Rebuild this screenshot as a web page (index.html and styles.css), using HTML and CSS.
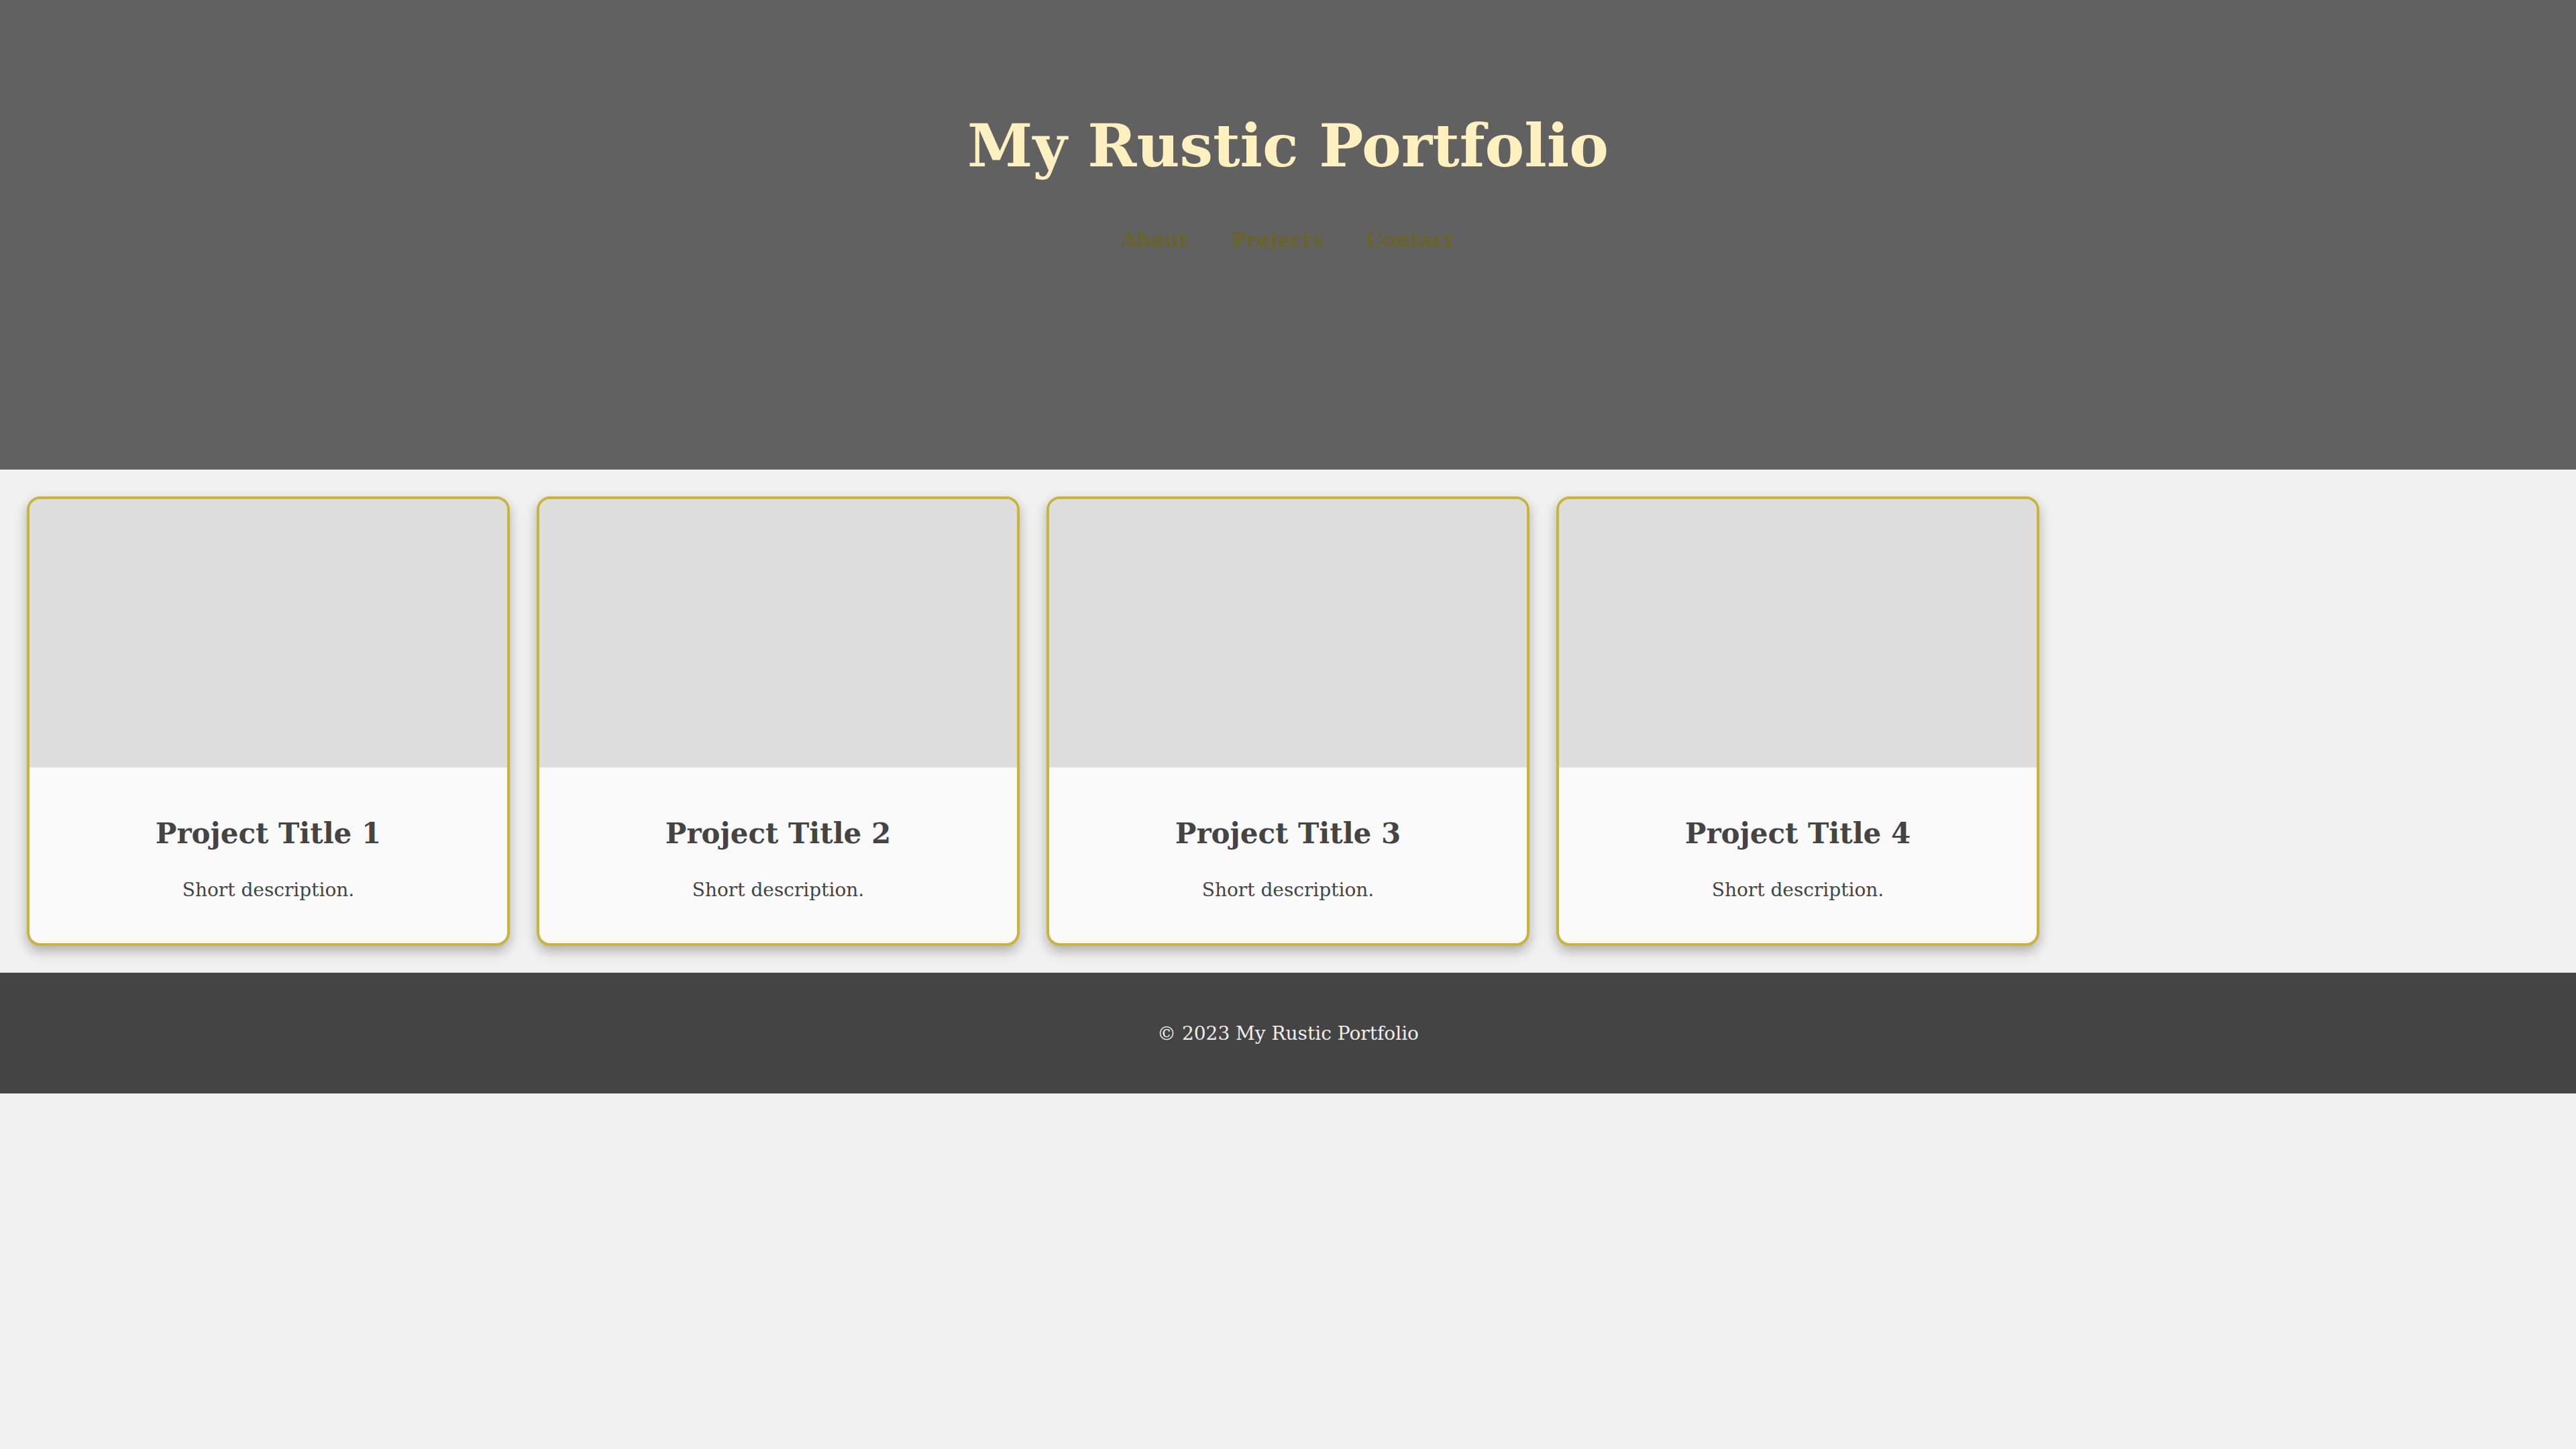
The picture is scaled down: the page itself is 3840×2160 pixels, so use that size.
FILE: index.html
```html
<!DOCTYPE html>
<html lang="en">
<head>
<meta charset="utf-8">
<title>My Rustic Portfolio</title>
<link rel="stylesheet" href="styles.css">
</head>
<body>
<header class="site-header">
  <h1 class="site-title">My Rustic Portfolio</h1>
  <nav class="site-nav">
    <a href="#about">About</a>
    <a href="#projects">Projects</a>
    <a href="#contact">Contact</a>
  </nav>
</header>
<main class="projects">
  <article class="card">
    <div class="card-image"></div>
    <div class="card-body">
      <h3 class="card-title">Project Title 1</h3>
      <p class="card-text">Short description.</p>
    </div>
  </article>
  <article class="card">
    <div class="card-image"></div>
    <div class="card-body">
      <h3 class="card-title">Project Title 2</h3>
      <p class="card-text">Short description.</p>
    </div>
  </article>
  <article class="card">
    <div class="card-image"></div>
    <div class="card-body">
      <h3 class="card-title">Project Title 3</h3>
      <p class="card-text">Short description.</p>
    </div>
  </article>
  <article class="card">
    <div class="card-image"></div>
    <div class="card-body">
      <h3 class="card-title">Project Title 4</h3>
      <p class="card-text">Short description.</p>
    </div>
  </article>
</main>
<footer class="site-footer">
  <p>&copy; 2023 My Rustic Portfolio</p>
</footer>
</body>
</html>
```
FILE: styles.css
```css
* { box-sizing: border-box; }
html, body { margin: 0; padding: 0; }
body {
  background: #f1f1f1;
  font-family: "DejaVu Serif", "Liberation Serif", serif;
  color: #444;
  font-size: 32px;
}
.site-header {
  background: #616161;
  height: 700px;
  padding-top: 165px;
  text-align: center;
}
.site-title {
  margin: 0;
  font-size: 88px;
  line-height: 1.2;
  color: #fff0c0;
  font-weight: bold;
}
.site-nav {
  margin-top: 69px;
  display: flex;
  justify-content: center;
  gap: 64px;
}
.site-nav a {
  color: #6b6426;
  text-decoration: none;
  font-weight: bold;
  font-size: 30px;
}
.projects {
  display: grid;
  grid-template-columns: repeat(4, 720px);
  gap: 40px;
  padding: 40px;
}
.card {
  border: 4px solid #c9b53a;
  border-radius: 20px;
  overflow: hidden;
  background: #fafafa;
  box-shadow: 0 8px 18px rgba(0, 0, 0, 0.28);
}
.card-image {
  height: 400px;
  background: #dddddd;
}
.card-body {
  padding: 74px 40px 58px;
  text-align: center;
}
.card-title {
  margin: 0 0 38px;
  font-size: 42px;
  line-height: 1.2;
  color: #444;
}
.card-text {
  margin: 0;
  font-size: 28px;
  line-height: 1.5;
  color: #444;
}
.site-footer {
  background: #444;
  height: 180px;
  display: flex;
  align-items: center;
  justify-content: center;
}
.site-footer p {
  margin: 0;
  color: #eeeeee;
  font-size: 28px;
}
```
